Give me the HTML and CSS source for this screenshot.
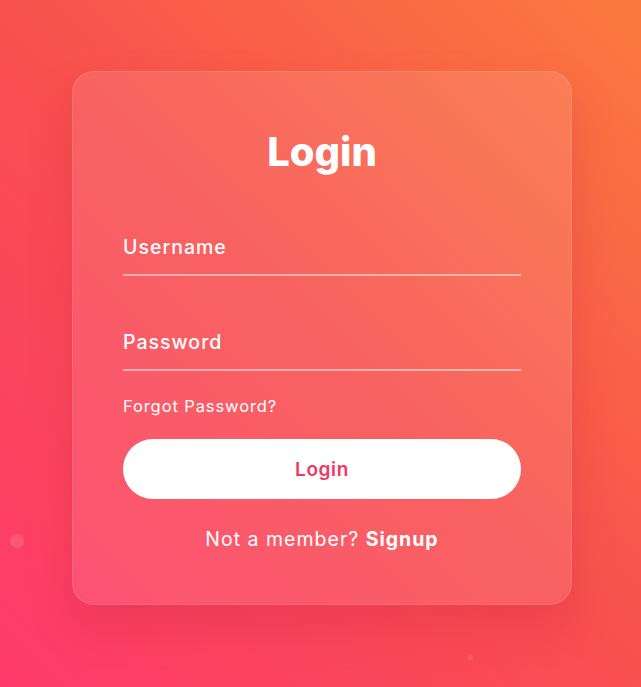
FILE: index.html
```html
<!DOCTYPE html>
<html lang="en">

<head>
    <meta charset="UTF-8">
    <meta name="viewport" content="width=device-width, initial-scale=1.0">
    <title>Login</title>
    <link rel="stylesheet" href="styles.css">
</head>

<body>
    <!-- decorative bubbles -->
    <span class="bubble bubble-one"></span>
    <span class="bubble bubble-two"></span>

    <main class="card">
        <h1>Login</h1>
        <form class="login-form">
            <div class="field">
                <label for="username">Username</label>
                <input type="text" id="username">
            </div>
            <div class="field">
                <label for="password">Password</label>
                <input type="password" id="password">
            </div>
            <a href="#" class="forgot">Forgot Password?</a>
            <button type="button" class="login-button">Login</button>
            <p class="signup">Not a member? <a href="#">Signup</a></p>
        </form>
    </main>
</body>

</html>
```

FILE: styles.css
```css
* {
    box-sizing: border-box;
}

body {
    margin: 0;
    height: 687px;
    font-family: Inter, "Noto Sans", sans-serif;
    color: #fff;
    background: linear-gradient(45deg, #fe3a6b 0%, #f8504f 50%, #fb7a3e 100%);
    display: flex;
    justify-content: center;
    align-items: flex-start;
    overflow: hidden;
    position: relative;
}

.bubble {
    position: absolute;
    border-radius: 50%;
    background: rgba(255, 255, 255, 0.12);
}

.bubble-one {
    width: 14px;
    height: 14px;
    left: 10px;
    top: 534px;
}

.bubble-two {
    width: 5px;
    height: 5px;
    left: 468px;
    top: 655px;
    background: rgba(255, 255, 255, 0.08);
}

.card {
    margin-top: 71px;
    margin-left: 3px;
    width: 500px;
    padding: 50px 50px 51px;
    border-radius: 22px;
    background: rgba(255, 255, 255, 0.1);
    border: 1px solid rgba(255, 255, 255, 0.1);
    box-shadow: 0 22px 40px rgba(200, 30, 60, 0.25);
}

h1 {
    margin: 0;
    font-size: 40px;
    font-weight: 800;
    line-height: 60px;
    text-align: center;
    letter-spacing: 0;
}

.login-form {
    display: flex;
    flex-direction: column;
}

.field {
    position: relative;
    height: 50px;
    border-bottom: 2px solid rgba(255, 255, 255, 0.5);
    margin-top: 45px;
}

.field:first-child {
    margin-top: 44px;
}

.field label {
    position: absolute;
    left: 0;
    top: 7px;
    font-size: 19.5px;
    line-height: 28px;
    font-weight: 500;
    letter-spacing: 1px;
}

.field input {
    width: 100%;
    height: 100%;
    background: transparent;
    border: none;
    outline: none;
    color: #fff;
    font-size: 18px;
}

.forgot {
    margin-top: 23px;
    font-size: 16.5px;
    line-height: 24px;
    letter-spacing: 0.9px;
    color: #fff;
    text-decoration: none;
    align-self: flex-start;
}

.login-button {
    margin-top: 21px;
    height: 60px;
    border: none;
    border-radius: 30px;
    background: #fff;
    color: #f5365f;
    font-family: inherit;
    font-size: 19px;
    font-weight: 600;
    letter-spacing: 0.6px;
    cursor: pointer;
}

.signup {
    margin: 27px 0 0;
    text-align: center;
    font-size: 19.5px;
    line-height: 27px;
    letter-spacing: 1px;
}

.signup a {
    color: #fff;
    font-weight: 700;
    text-decoration: none;
}
```
